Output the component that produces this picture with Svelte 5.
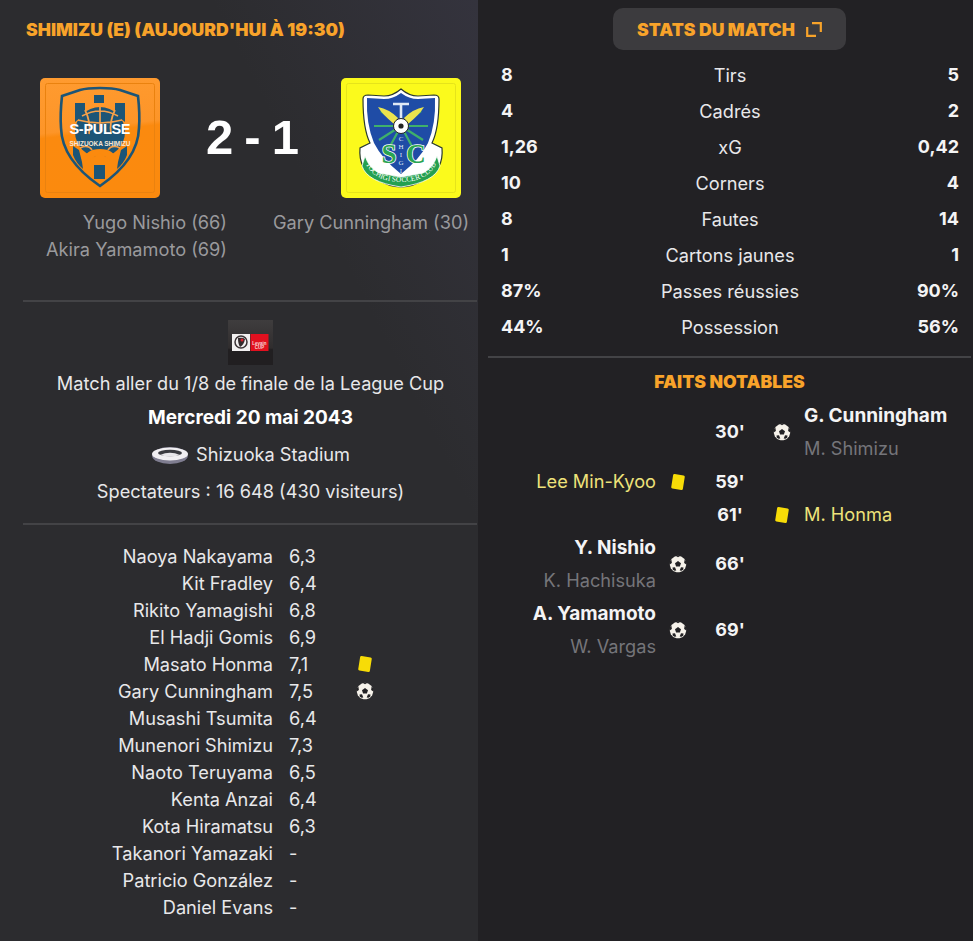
<script>
  const homeScorers = ['Yugo Nishio (66)', 'Akira Yamamoto (69)'];
  const stats = [
    ['8', 'Tirs', '5'],
    ['4', 'Cadrés', '2'],
    ['1,26', 'xG', '0,42'],
    ['10', 'Corners', '4'],
    ['8', 'Fautes', '14'],
    ['1', 'Cartons jaunes', '1'],
    ['87%', 'Passes réussies', '90%'],
    ['44%', 'Possession', '56%']
  ];
  const lineup = [
    ['Naoya Nakayama', '6,3', ''],
    ['Kit Fradley', '6,4', ''],
    ['Rikito Yamagishi', '6,8', ''],
    ['El Hadji Gomis', '6,9', ''],
    ['Masato Honma', '7,1', 'card'],
    ['Gary Cunningham', '7,5', 'ball'],
    ['Musashi Tsumita', '6,4', ''],
    ['Munenori Shimizu', '7,3', ''],
    ['Naoto Teruyama', '6,5', ''],
    ['Kenta Anzai', '6,4', ''],
    ['Kota Hiramatsu', '6,3', ''],
    ['Takanori Yamazaki', '-', ''],
    ['Patricio González', '-', ''],
    ['Daniel Evans', '-', '']
  ];
  const events = [
    { side: 'away', min: "30'", icon: 'ball', name: 'G. Cunningham', assist: 'M. Shimizu' },
    { side: 'home', min: "59'", icon: 'card', name: 'Lee Min-Kyoo' },
    { side: 'away', min: "61'", icon: 'card', name: 'M. Honma' },
    { side: 'home', min: "66'", icon: 'ball', name: 'Y. Nishio', assist: 'K. Hachisuka' },
    { side: 'home', min: "69'", icon: 'ball', name: 'A. Yamamoto', assist: 'W. Vargas' }
  ];
</script>

{#snippet icon(kind)}
  {#if kind === 'card'}
    <svg class="ico" viewBox="0 0 18 18" width="18" height="18">
      <rect x="3.1" y="1.7" width="11.8" height="14.6" rx="1.4" fill="#f7dc07" transform="rotate(9 9 9)" />
    </svg>
  {:else if kind === 'ball'}
    <svg class="ico" viewBox="0 0 18 18" width="18" height="18">
      <path d="M9 .8l3.200.7 3 2.200 1.800 3 .2 3.300-1 3.300-2.400 2.700-3.300 1.200H7.500l-3.300-1.200-2.400-2.700-1-3.300.2-3.300 1.800-3 3-2.200z" fill="#f6f2ea" />
      <path d="M9 6l3 2.200-1.100 3.400H7.100L6 8.200z" fill="#222124" />
      <path d="M7 .9L9 2.200 11 .9 9 .6zM15.600 4.800l-.5 3.200 2.200 1.400V6.600zM2.400 4.800l.5 3.200L.7 9.400V6.600zM3.800 14.800l-.3-2.300 2.500-.2 1.300 3.200-1.800.3zM14.200 14.800l.3-2.300-2.500-.2-1.300 3.200 1.800.3z" fill="#222124" />
    </svg>
  {/if}
{/snippet}

{#snippet eventPlayer(e)}
  <div class="ev-name" class:booked={e.icon === 'card'}>{e.name}</div>
  {#if e.assist}<div class="ev-assist">{e.assist}</div>{/if}
{/snippet}

<div class="page">
  <section class="left">
    <h2 class="title">SHIMIZU (E) (AUJOURD'HUI À 19:30)</h2>

    <div class="score-grid">
      <div class="crest-cell home">
        <svg class="crest" viewBox="0 0 120 120" width="120" height="120">
          <defs>
            <linearGradient id="or" x1="0" y1="0" x2="0.12" y2="1">
              <stop offset="0" stop-color="#ff9b30" />
              <stop offset="0.46" stop-color="#fd9528" />
              <stop offset="0.5" stop-color="#fb8a0f" />
              <stop offset="1" stop-color="#fb8a0e" />
            </linearGradient>
          </defs>
          <rect width="120" height="120" rx="5" fill="url(#or)" />
          <rect x="5.500" y="5.500" width="109" height="109" rx="2" fill="none" stroke="#ea820f" />
          <path d="M60 10q-13 0-20 2l-18 6q-2 18-1 32 1 32 39 58 38-26 39-58 1-14-1-32l-18-6q-7-2-20-2z" fill="none" stroke="#1c5577" stroke-width="2.600" />
          <g fill="#1c5577">
            <rect x="54" y="17" width="10" height="8" />
            <path d="M35 25h10v11l-10 8zM75 25h10v19l-10-8z" />
            <rect x="54" y="84" width="11" height="17" />
            <path d="M33 68l6 4 3 12 1 7q-7-6-10-14zM87 68l-6 4-3 12-1 7q7-6 10-14z" />
          </g>
          <circle cx="60" cy="54" r="25" fill="#1c5577" />
          <g fill="none" stroke="#f5a04a" stroke-width="1.700">
            <path d="M42 38q18-10 36 0M45 32q6 12 4 24M75 32q-6 12-4 24M60 29v24M38 42q22 6 44 0" />
            <path d="M40 70q8-4 12 2M80 70q-8-4-12 2" />
          </g>
          <path d="M43 84q2-13 17-13t17 13q-8-6-17-6t-17 6z" fill="#fb8a0e" />
          <path d="M50 82l10-7 10 7-2 5H52z" fill="#fb8a0e" />
          <text x="60" y="56" class="sp1" text-anchor="middle" textLength="61">S-PULSE</text>
          <text x="60" y="67.500" class="sp2" text-anchor="middle" textLength="61">SHIZUOKA SHIMIZU</text>
        </svg>
      </div>
      <div class="score">2 - 1</div>
      <div class="crest-cell away">
        <svg class="crest" viewBox="0 0 120 120" width="120" height="120">
          <defs>
            <path id="band" d="M24 84q8 20 36 20t36-20" />
          </defs>
          <rect width="120" height="120" rx="5" fill="#fbfa1c" />
          <rect x="5.500" y="5.500" width="109" height="109" rx="2" fill="none" stroke="#e6e41a" />
          <path d="M60 11q8 7 17 7l16-1q5 0 5 4 0 30-7 44l10 5q2 22-17 31-12 8-24 8t-24-8q-19-9-17-31l10-5q-7-14-7-44 0-4 5-4l16 1q9 0 17-7z" fill="#fff" stroke="#2a3a30" stroke-width="1.200" />
          <path d="M60 15q8 6 17 6l17-1q1 26-7 45-8 16-27 31-19-15-27-31-8-19-7-45l17 1q9 0 17-6z" fill="#1f4ca6" />
          <path d="M60 48L40 33M60 48l20-15M60 48H33M60 48h27M60 48L38 62M60 48l22 14M60 48L47 72M60 48l13 24" stroke="#3fb06b" stroke-width="2.200" />
          <path d="M53 46Q41 36 37 29q11 2 20 11zM67 46q12-10 16-17-11 2-20 11z" fill="#ece44e" />
          <path d="M52 26h16M60 26v20" stroke="#dfe8f5" stroke-width="2.600" fill="none" />
          <circle cx="60" cy="48" r="7.500" fill="#fff" stroke="#222" />
          <circle cx="60" cy="48" r="2.600" fill="#222" />
          <path d="M24 78q4 12 14 17l22 4 22-4q10-5 14-17l3 10q-5 16-39 21-34-5-39-21z" fill="#25a050" stroke="#fff" stroke-width="0.800" />
          <text class="band-text"><textPath href="#band" startOffset="50%" text-anchor="middle">TOCHIGI SOCCER CLUB</textPath></text>
          <text x="48" y="85" class="tc" text-anchor="middle">S</text>
          <text x="75" y="85" class="tc" text-anchor="middle">C</text>
          <text x="60" y="63" class="tc2" text-anchor="middle">C</text>
          <text x="60" y="71" class="tc2" text-anchor="middle">H</text>
          <text x="60" y="79" class="tc2" text-anchor="middle">I</text>
          <text x="60" y="87" class="tc2" text-anchor="middle">G</text>
          <text x="60" y="95" class="tc2" text-anchor="middle">I</text>
        </svg>
      </div>
      <div class="scorers home">
        {#each homeScorers as s}<div>{s}</div>{/each}
      </div>
      <div></div>
      <div class="scorers away"><div>Gary Cunningham (30)</div></div>
    </div>

    <hr class="rule first" />

    <div class="comp">
      <div class="comp-logo">
        <svg viewBox="0 0 45 45" width="45" height="45">
          <defs>
            <linearGradient id="cg" x1="0" y1="0" x2="0" y2="1">
              <stop offset="0" stop-color="#3f3d3e" />
              <stop offset="0.62" stop-color="#302d2e" />
              <stop offset="0.66" stop-color="#211f21" />
              <stop offset="1" stop-color="#211f21" />
            </linearGradient>
          </defs>
          <rect width="45" height="45" fill="url(#cg)" />
          <rect x="4" y="14" width="18" height="17" fill="#f2f0f0" />
          <rect x="22.500" y="14" width="18" height="17" fill="#e2101f" />
          <circle cx="13" cy="22" r="6" fill="none" stroke="#3a3335" stroke-width="1.500" />
          <path d="M10 18q5-1 7 1-1 6-5 8-2-3-2-9z" fill="#332a2c" />
          <circle cx="14" cy="20" r="1.500" fill="#d9202c" />
          <text x="31.500" y="24.500" class="lev" text-anchor="middle">Levain</text>
          <text x="31.500" y="29" class="lev" text-anchor="middle">CUP</text>
        </svg>
      </div>
      <div class="comp-line">Match aller du 1/8 de finale de la League Cup</div>
      <div class="comp-date">Mercredi 20 mai 2043</div>
      <div class="comp-line stadium">
        <svg viewBox="0 0 38 20" width="38" height="20">
          <ellipse cx="19" cy="10.500" rx="18" ry="8.500" fill="#7f7d90" />
          <ellipse cx="19" cy="9" rx="18" ry="6.500" fill="#f1eff2" />
          <ellipse cx="19" cy="8" rx="12" ry="3.200" fill="#3a3a40" />
          <path d="M9 10q10-4.500 20 0-10 3-20 0z" fill="#e8e6ea" />
        </svg>
        <span>Shizuoka Stadium</span>
      </div>
      <div class="comp-line">Spectateurs : 16 648 (430 visiteurs)</div>
    </div>

    <hr class="rule" />

    <div class="lineup">
      {#each lineup as [name, rating, kind]}
        <div class="lu-name">{name}</div>
        <div class="lu-rate">{rating}</div>
        <div class="lu-icon">{@render icon(kind)}</div>
      {/each}
    </div>
  </section>

  <section class="right">
    <div class="btn-row">
      <button class="stats-btn">
        <span>STATS DU MATCH</span>
        <svg viewBox="0 0 16 15" width="16" height="15" fill="none" stroke="#f8a32a" stroke-width="2.200">
          <path d="M6 1.200h8.800V10M1.200 5v8.800H10" />
        </svg>
      </button>
    </div>

    <div class="stats">
      {#each stats as [a, label, b]}
        <div class="stat-row">
          <span class="num">{a}</span>
          <span class="label">{label}</span>
          <span class="num end">{b}</span>
        </div>
      {/each}
    </div>

    <hr class="rule r" />

    <h3 class="sub">FAITS NOTABLES</h3>

    <div class="events">
      {#each events as e}
        <div class="ev-side home">{#if e.side === 'home'}{@render eventPlayer(e)}{/if}</div>
        <div class="ev-ico">{#if e.side === 'home'}{@render icon(e.icon)}{/if}</div>
        <div class="ev-min">{e.min}</div>
        <div class="ev-ico">{#if e.side === 'away'}{@render icon(e.icon)}{/if}</div>
        <div class="ev-side">{#if e.side === 'away'}{@render eventPlayer(e)}{/if}</div>
      {/each}
    </div>
  </section>
</div>

<style>
  :global(body) {
    margin: 0;
    background: #222124;
  }
  .page {
    display: flex;
    width: 973px;
    height: 941px;
    overflow: hidden;
    font-family: Inter, "Liberation Sans", sans-serif;
    font-size: 18.2px;
    color: #e8e8ea;
  }
  .left {
    width: 478px;
    box-sizing: border-box;
    padding: 0 0 0 23px;
    background:
      linear-gradient(to top right, transparent 72%, rgba(84, 80, 118, 0.2) 100%),
      #2c2c2f;
  }
  .right {
    flex: 1;
    background: #222124;
    padding-left: 10px;
    padding-right: 2px;
  }
  .title {
    margin: 0;
    padding: 20px 0 0 3px;
    height: 58px;
    box-sizing: border-box;
    font: 900 17.600px/20px Inter, sans-serif;
    color: #f8a32a;
    white-space: nowrap;
  }
  .score-grid {
    display: grid;
    grid-template-columns: 204px 46px 195px;
    margin-top: 20px;
  }
  .crest-cell.home {
    padding-left: 17px;
  }
  .crest-cell.away {
    padding-left: 68px;
    white-space: nowrap;
  }
  .crest {
    display: block;
  }
  .score {
    width: 46px;
    font: 700 49px/118px "Liberation Sans", sans-serif;
    word-spacing: -2.5px;
    color: #fff;
    white-space: nowrap;
    display: flex;
    justify-content: center;
    padding-left: 2.5px;
  }
  .scorers {
    margin-top: 11px;
    color: #9a9a9d;
    line-height: 27px;
    white-space: nowrap;
  }
  .scorers.home {
    text-align: right;
    padding-right: 0;
  }
  .sp1 {
    font: 700 14.500px "Liberation Sans", sans-serif;
    fill: #fff;
  }
  .sp2 {
    font: 700 6.500px "Liberation Sans", sans-serif;
    fill: #f6e6d6;
  }
  .tc {
    font: 700 27px "Liberation Serif", serif;
    fill: #2aa452;
    stroke: #fff;
    stroke-width: 1.500px;
    paint-order: stroke;
  }
  .tc2 {
    font: 400 7px "Liberation Serif", serif;
    fill: #dfe8f5;
  }
  .band-text {
    font: 400 7.500px "Liberation Serif", serif;
    fill: #fff;
  }
  .lev {
    font: 700 4.500px "Liberation Sans", sans-serif;
    fill: #f7d6d6;
  }
  .rule {
    border: 0;
    height: 2px;
    margin: 0;
    width: 454px;
    background: #434346;
  }
  .rule.first {
    margin-top: 37px;
  }
  .comp {
    text-align: center;
    height: 221px;
    box-sizing: border-box;
    padding-top: 18px;
  }
  .comp-logo {
    height: 45px;
  }
  .comp-logo svg {
    display: block;
    margin: 0 auto;
  }
  .comp-line {
    line-height: 37px;
    height: 37px;
  }
  .comp-date {
    font-weight: 700;
    font-size: 19px;
    line-height: 32px;
    color: #fff;
    margin-bottom: 2px;
  }
  .stadium {
    display: flex;
    justify-content: center;
    align-items: center;
    gap: 7px;
  }
  .lineup {
    display: grid;
    grid-template-columns: 250px 52px 20px;
    grid-auto-rows: 27px;
    column-gap: 16px;
    align-items: center;
    margin-top: 17px;
  }
  .lu-name {
    text-align: right;
  }
  .lu-icon {
    display: flex;
    justify-content: center;
    margin-left: -5px;
  }
  .ico {
    display: block;
  }
  .btn-row {
    display: flex;
    justify-content: center;
    padding-top: 8px;
  }
  .stats-btn {
    width: 233px;
    height: 42px;
    border: 0;
    border-radius: 10px;
    background: #3c3b3e;
    color: #f8a32a;
    font: 900 17.600px/20px Inter, sans-serif;
    display: flex;
    align-items: center;
    justify-content: center;
    gap: 11px;
    padding: 1px 0 0;
  }
  .stats {
    padding: 7px 12px 0 13px;
  }
  .stat-row {
    display: grid;
    grid-template-columns: 1fr auto 1fr;
    height: 36px;
    line-height: 36px;
  }
  .num {
    font-weight: 700;
    font-size: 18px;
    color: #f4f4f5;
  }
  .end {
    text-align: right;
  }
  .rule.r {
    width: 483px;
    margin-top: 11px;
  }
  .sub {
    margin: 14px 0 0;
    font: 900 17.600px/20px Inter, sans-serif;
    color: #f8a32a;
    text-align: center;
  }
  .events {
    display: grid;
    grid-template-columns: 168px 44px 60px 44px 1fr;
    margin-top: 7px;
    align-items: center;
  }
  .ev-side {
    line-height: 33px;
    white-space: nowrap;
  }
  .ev-side.home {
    text-align: right;
  }
  .ev-ico {
    display: flex;
    justify-content: center;
  }
  .ev-min {
    text-align: center;
    font-weight: 700;
    font-size: 18px;
    color: #f4f4f5;
    padding-bottom: 1px;
  }
  .ev-name {
    font-weight: 700;
    font-size: 19px;
    color: #f4f4f5;
  }
  .ev-name.booked {
    font-weight: 400;
    font-size: 18.2px;
    color: #eee27a;
  }
  .ev-assist {
    color: #75757a;
  }
</style>
